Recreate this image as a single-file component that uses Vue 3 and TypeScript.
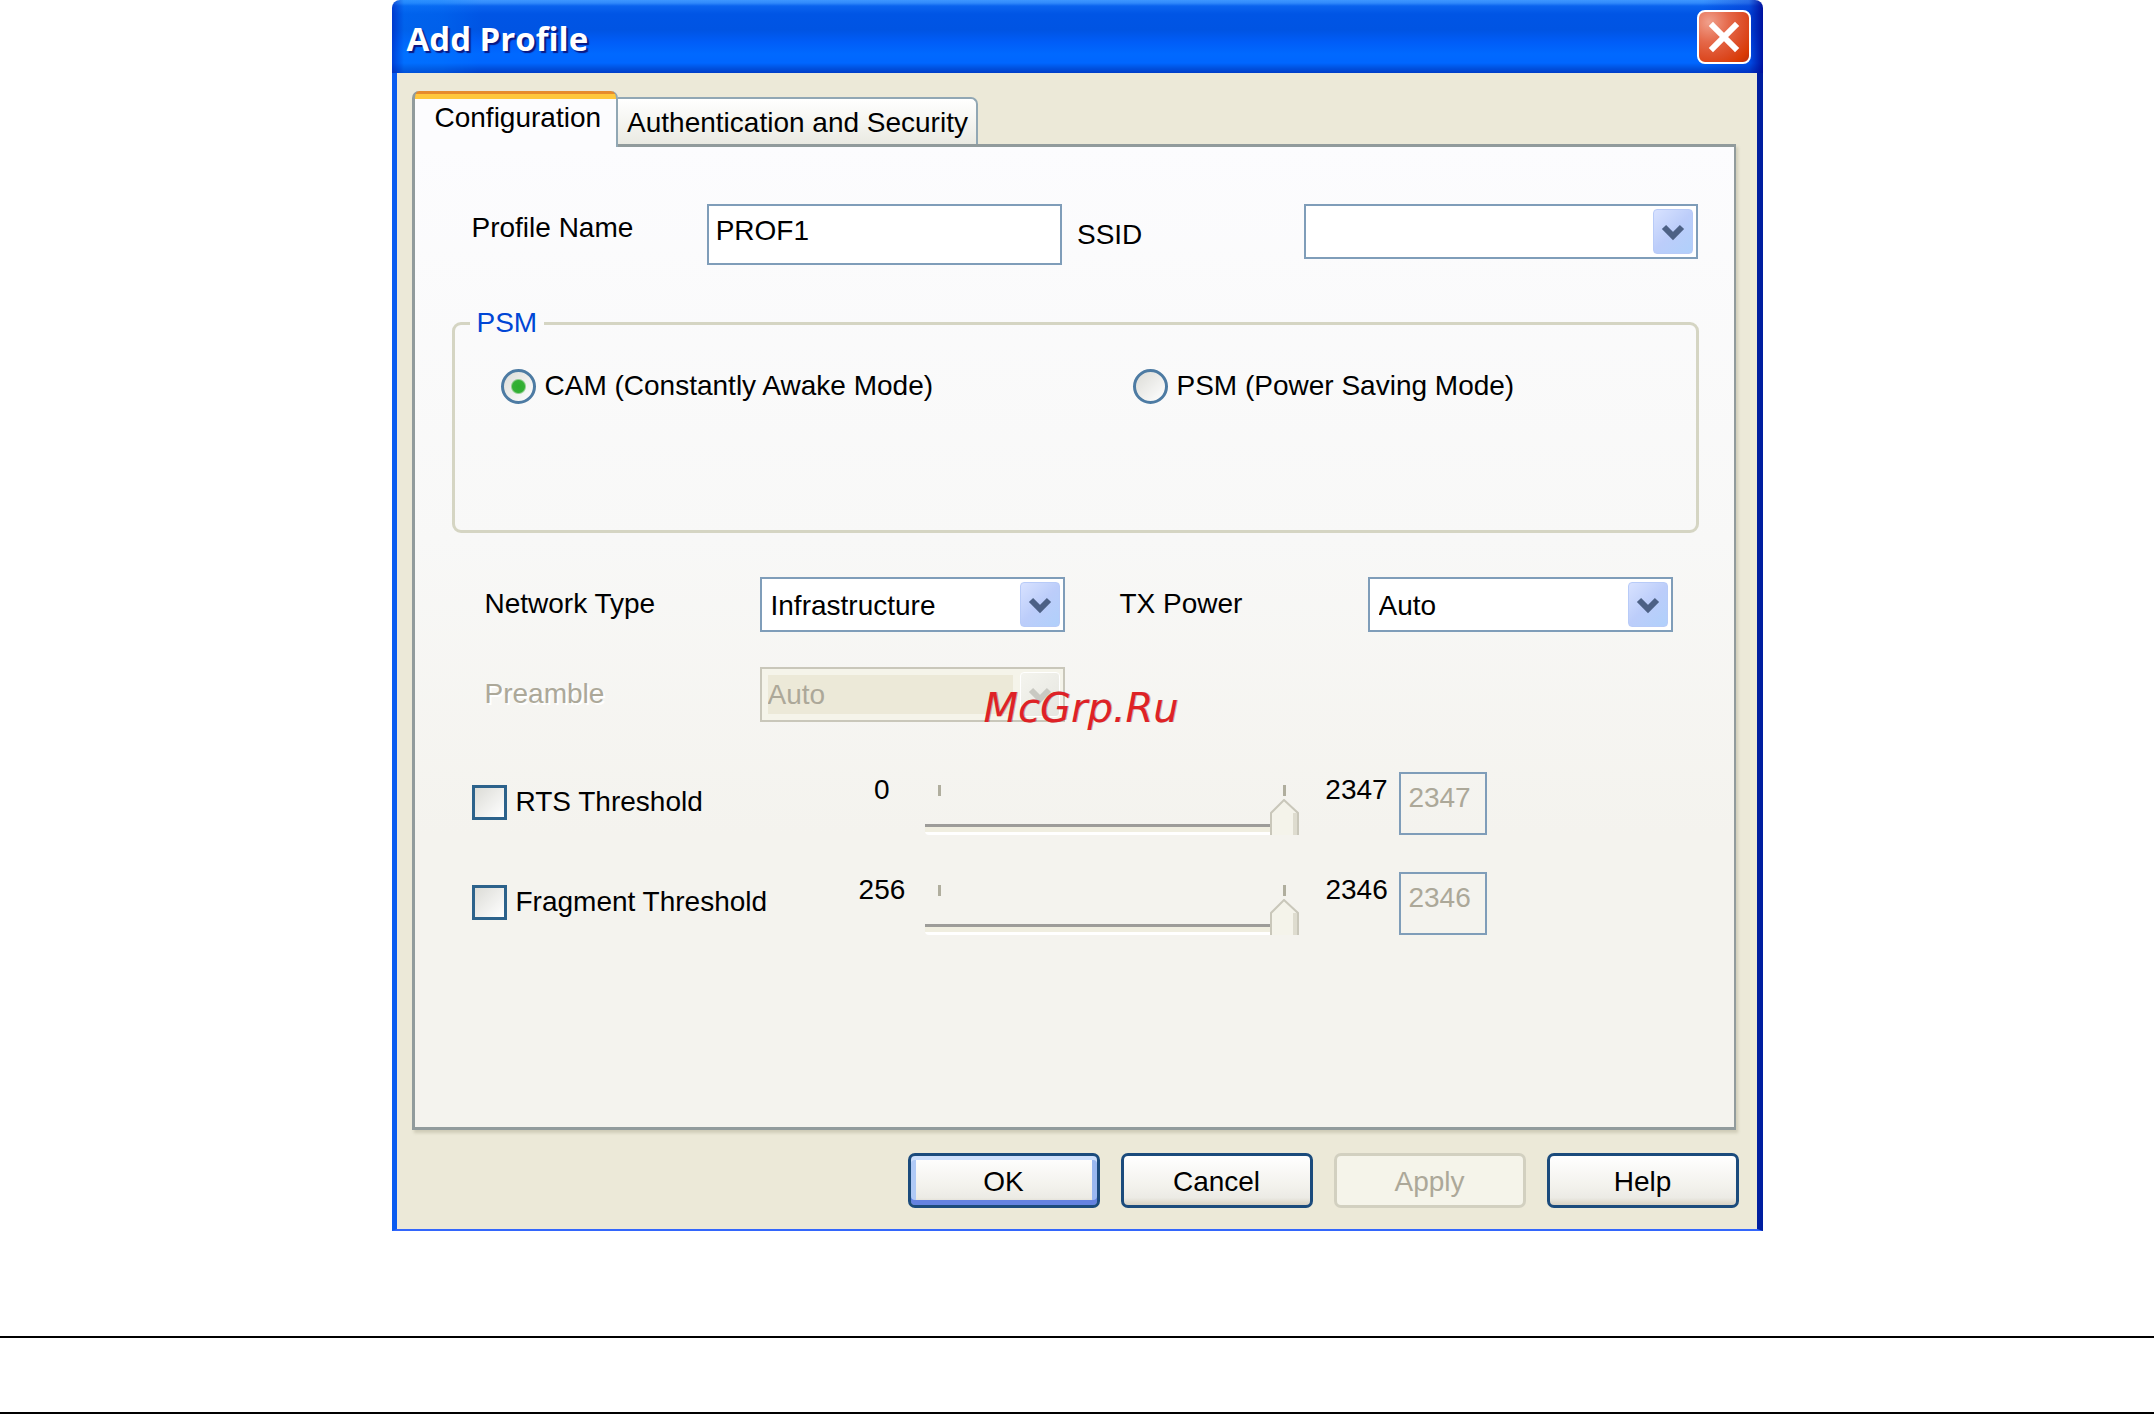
<script setup lang="ts">
import { ref } from 'vue'

interface Threshold {
  id: string
  label: string
  min: number
  max: number
  enabled: boolean
  value: number
}

const profileName = ref('PROF1')
const ssid = ref('')
const powerMode = ref('cam')
const networkType = ref('Infrastructure')
const txPower = ref('Auto')
const preamble = ref('Auto')
const thresholds = ref<Threshold[]>([
  { id: 'rts', label: 'RTS Threshold', min: 0, max: 2347, enabled: false, value: 2347 },
  { id: 'fragment', label: 'Fragment Threshold', min: 256, max: 2346, enabled: false, value: 2346 },
])
</script>

<template>
  <main class="page">
    <section class="dialog" aria-labelledby="dialog-title">
      <header class="titlebar">
        <h1 id="dialog-title">Add Profile</h1>
        <button class="close" type="button" aria-label="Close">
          <svg viewBox="0 0 50 50" aria-hidden="true">
            <path d="M14 14 L36 36 M36 14 L14 36" stroke="#fff" stroke-width="6" stroke-linecap="square" />
          </svg>
        </button>
      </header>

      <form class="body" @submit.prevent>
        <div class="tabs" role="tablist">
          <button class="tab active" type="button" role="tab" aria-selected="true">Configuration</button>
          <button class="tab" type="button" role="tab" aria-selected="false">Authentication and Security</button>
        </div>

        <div class="panel" role="tabpanel">
          <div class="identity">
            <label class="raised" for="profile">Profile Name</label>
            <input id="profile" v-model="profileName" class="box name" type="text" />
            <label class="ssid" for="ssid">SSID</label>
            <div class="combo">
              <select id="ssid" v-model="ssid"><option value=""></option></select>
              <span class="arrow"><svg viewBox="0 0 24 20"><path d="M3 5 L12 14 L21 5" /></svg></span>
            </div>
          </div>

          <fieldset class="group">
            <legend>PSM</legend>
            <div class="modes">
              <label class="choice"><input v-model="powerMode" type="radio" name="mode" value="cam" />CAM (Constantly Awake Mode)</label>
              <label class="choice"><input v-model="powerMode" type="radio" name="mode" value="psm" />PSM (Power Saving Mode)</label>
            </div>
          </fieldset>

          <div class="options">
            <label for="network">Network Type</label>
            <div class="combo">
              <select id="network" v-model="networkType"><option>Infrastructure</option></select>
              <span class="arrow"><svg viewBox="0 0 24 20"><path d="M3 5 L12 14 L21 5" /></svg></span>
            </div>
            <label class="second" for="power">TX Power</label>
            <div class="combo">
              <select id="power" v-model="txPower"><option>Auto</option></select>
              <span class="arrow"><svg viewBox="0 0 24 20"><path d="M3 5 L12 14 L21 5" /></svg></span>
            </div>
            <label class="off" for="preamble">Preamble</label>
            <div class="combo">
              <select id="preamble" v-model="preamble" disabled><option>Auto</option></select>
              <span class="arrow muted"><svg viewBox="0 0 24 20"><path d="M3 5 L12 14 L21 5" /></svg></span>
            </div>
          </div>

          <div class="thresholds">
            <div v-for="t in thresholds" :key="t.id" class="threshold">
              <label class="choice"><input v-model="t.enabled" type="checkbox" />{{ t.label }}</label>
              <span class="low">{{ t.min }}</span>
              <div class="slider">
                <div class="ticks"><i></i><i></i></div>
                <input v-model.number="t.value" type="range" :min="t.min" :max="t.max" :aria-label="t.label" :disabled="!t.enabled" />
              </div>
              <span class="high">{{ t.max }}</span>
              <input v-model.number="t.value" class="box number" type="text" :aria-label="t.label + ' value'" :disabled="!t.enabled" />
            </div>
          </div>
        </div>

        <div class="actions">
          <button class="push default" type="submit">OK</button>
          <button class="push" type="button">Cancel</button>
          <button class="push" type="button" disabled>Apply</button>
          <button class="push" type="button">Help</button>
        </div>
      </form>
      <span class="watermark">McGrp.Ru</span>
    </section>
    <footer class="rules"></footer>
  </main>
</template>

<style>
body {
  margin: 0;
  background: #fff;
}
</style>

<style scoped>
.page,
.page * {
  box-sizing: border-box;
}

.page {
  font-family: "Liberation Sans", Arial, sans-serif;
  font-size: 28px;
  line-height: 40px;
  color: #000;
}

button,
input,
select {
  font: inherit;
  color: inherit;
  margin: 0;
}

.dialog {
  position: relative;
  width: 100%;
  max-width: 1371px;
  margin: 0 auto;
}

.titlebar {
  display: flex;
  align-items: center;
  justify-content: space-between;
  padding: 10px 12px 9px 15px;
  border-radius: 8px 8px 0 0;
  background:
    linear-gradient(90deg, rgba(0, 40, 190, 0.6) 0, rgba(0, 130, 255, 0.3) 12px, rgba(0, 130, 255, 0.25) 50px, transparent 90px, transparent calc(100% - 60px), rgba(0, 20, 180, 0.3) calc(100% - 14px), rgba(0, 10, 150, 0.9) 100%),
    linear-gradient(#3e97ff 0, #3089fb 3px, #0a63ee 6px, #0055e5 14px, #0054e3 30px, #005df8 42px, #0069ff 54px, #0066ff 63px, #0052e0 68px, #003dc8 73px);
}

h1 {
  margin: 0;
  padding-top: 4px;
  font-family: "Open Sans", sans-serif;
  font-size: 33px;
  line-height: 40px;
  font-weight: 700;
  color: #fff;
  text-shadow: 2px 2px 1px #0a1883;
}

.close {
  width: 54px;
  height: 54px;
  padding: 0;
  border: 2px solid #fff;
  border-radius: 8px;
  background: radial-gradient(circle at 20% 20%, #f0a08c 0, #e5694a 35%, #dc4b24 65%, #d93a04 85%, #b93010 100%);
}

.close svg {
  display: block;
  width: 50px;
  height: 50px;
}

.body {
  padding: 18px 18px 21px 15px;
  background: #ece9d8;
  border-style: solid;
  border-width: 0 6px 2px 5px;
  border-color: transparent #001ea0 #3366fc #0a5cf0;
}

.tabs {
  display: flex;
  align-items: flex-end;
}

.tab {
  height: 47px;
  padding: 2px 8px 0 9px;
  border: 2px solid #91a7b4;
  border-bottom: 0;
  border-left: 0;
  border-radius: 0 7px 0 0;
  background: linear-gradient(#fff, #f3f3ee 60%, #eaeae2);
  white-space: nowrap;
}

.tab.active {
  position: relative;
  height: 56px;
  margin-bottom: -3px;
  padding: 0 15px 3px 20px;
  border-left: 3px solid #919b9c;
  border-top: 0;
  border-radius: 7px 7px 0 0;
  background: linear-gradient(#e68b2c 0, #e68b2c 3px, #ffc73c 3px, #ffc73c 8px, #fcfcfe 8px);
}

.panel {
  margin-right: 3px;
  padding: 57px 0 192px;
  border: 3px solid #919b9c;
  border-width: 3px 2px 3px 3px;
  background: linear-gradient(#fcfcfe, #f8f8f7 40%, #f4f3ee 70%, #f4f3ee);
  box-shadow: 2px 3px 3px #cfccb8;
}

.identity {
  display: grid;
  grid-template-columns: 235fr 355fr 242fr 394fr;
  align-items: start;
  padding: 0 35px 0 57px;
}

.raised {
  padding-top: 4px;
}

.ssid {
  align-self: center;
  padding-left: 15px;
}

.box {
  width: 100%;
  border: 2px solid #7f9db9;
  border-radius: 0;
  background: #fff;
}

.name {
  height: 61px;
  padding: 0 7px 8px;
}

.combo {
  position: relative;
}

select {
  display: block;
  width: 100%;
  height: 55px;
  padding: 2px 45px 0 9px;
  border: 2px solid #7f9db9;
  border-radius: 0;
  background: #fff;
  appearance: none;
}

select:disabled {
  padding: 6px 50px 6px 6px;
  border-color: #c9c7ba;
  background: linear-gradient(#ece9d8, #ece9d8) content-box, #f5f4ea;
  color: #aca899;
  opacity: 1;
}

.arrow {
  position: absolute;
  top: 5px;
  right: 5px;
  bottom: 5px;
  display: grid;
  place-items: center;
  width: 40px;
  border: 1px solid #b8cbf8;
  border-radius: 4px;
  background: linear-gradient(135deg, #d8e2ff, #bccdfa 50%, #b0d0fb);
  pointer-events: none;
}

.arrow svg {
  width: 24px;
  height: 20px;
  fill: none;
  stroke: #4d6185;
  stroke-width: 6;
}

.arrow.muted {
  border-color: #fff;
  background: linear-gradient(135deg, #f4f4ee, #e6e6e0);
}

.muted svg {
  stroke: #c9c9c2;
}

.group {
  margin: 38px 35px 0 37px;
  padding: 23px 15px 124px;
  border: 3px solid #d5d5c3;
  border-radius: 9px;
}

legend {
  padding: 0 7px;
  color: #0046d5;
}

.modes {
  display: grid;
  grid-template-columns: 632fr 548fr;
  padding-left: 31px;
}

.choice {
  display: flex;
  align-items: center;
  gap: 9px;
  white-space: nowrap;
}

.choice input {
  flex: none;
  width: 35px;
  height: 35px;
  appearance: none;
  border: 3px solid #2c628b;
  background: linear-gradient(135deg, #dcdcd7, #fff);
}

.choice input[type="radio"] {
  border-color: #4d7ba3;
  border-radius: 50%;
}

.choice input[type="radio"]:checked {
  background: radial-gradient(circle, #2cae2c 0, #35b035 6px, transparent 8px), linear-gradient(135deg, #dcdcd7, #fff);
}

.options {
  display: grid;
  grid-template-columns: 275fr 305fr 303fr 305fr;
  row-gap: 35px;
  margin-top: 44px;
  padding: 0 61px 0 70px;
}

.options label {
  padding-top: 7px;
}

.options .second {
  padding-left: 55px;
}

.options .off {
  color: #aca899;
  text-shadow: 2px 2px 0 #fff;
}

.thresholds {
  display: grid;
  gap: 34px;
  margin-top: 47px;
}

.threshold {
  display: grid;
  grid-template-columns: 387fr 66fr 374fr 100fr 87fr;
  height: 66px;
  padding: 0 247px 0 57px;
}

.low {
  padding-top: 1px;
  padding-right: 20px;
  text-align: center;
}

.high {
  padding-top: 1px;
  padding-left: 26px;
}

.slider {
  align-self: end;
}

.ticks {
  display: flex;
  justify-content: space-between;
  padding: 0 13px;
}

.ticks i {
  width: 3px;
  height: 11px;
  background: #b0ae9e;
}

input[type="range"] {
  display: block;
  width: 100%;
  height: 39px;
  appearance: none;
  background: none;
}

input[type="range"]::-webkit-slider-runnable-track {
  height: 36px;
  margin-top: 3px;
  border-radius: 4px 0 0 4px;
  background: linear-gradient(transparent 25px, #9d9c99 25px, #9d9c99 28px, #f0eee0 28px, #f0eee0 33px, #fff 33px);
}

input[type="range"]::-webkit-slider-thumb {
  appearance: none;
  width: 29px;
  height: 36px;
  background: url("data:image/svg+xml,%3Csvg xmlns='http://www.w3.org/2000/svg' viewBox='0 0 29 36'%3E%3Cpath d='M1 37V14L14 1L28 14V37Z' fill='%23f4f3ea' stroke='%23c9c7ba' stroke-width='2'/%3E%3Cpath d='M25 14V36' stroke='%23dedccf' stroke-width='4'/%3E%3C/svg%3E") no-repeat;
}

.number {
  align-self: end;
  height: 63px;
  padding: 0 0 12px 7px;
  background: transparent;
  color: #aca899;
}

.actions {
  display: flex;
  justify-content: flex-end;
  gap: 21px;
  padding-top: 23px;
}

.push {
  width: 192px;
  height: 55px;
  padding: 2px 0 0;
  border: 3px solid #1b4b7c;
  border-radius: 7px;
  background: linear-gradient(#fff, #f3f2ed 60%, #ecebe5 85%, #d8d2c4);
}

.default {
  box-shadow: inset 0 4px 0 #cddffc, inset 0 -5px 0 #6482e0, inset 5px 0 0 #b0caf6, inset -5px 0 0 #9ab8f0;
}

.push:disabled {
  border-color: #d2d0c0;
  background: #f5f4ea;
  color: #aca899;
}

.watermark {
  position: absolute;
  top: 682px;
  left: 592px;
  font-family: "DejaVu Sans", sans-serif;
  font-size: 40px;
  line-height: 52px;
  font-style: italic;
  color: #de2226;
  text-shadow: 1px 0 0 rgba(40, 0, 0, 0.3);
}

.rules {
  height: 78px;
  margin-top: 105px;
  border: solid #000;
  border-width: 2px 0;
}
</style>
